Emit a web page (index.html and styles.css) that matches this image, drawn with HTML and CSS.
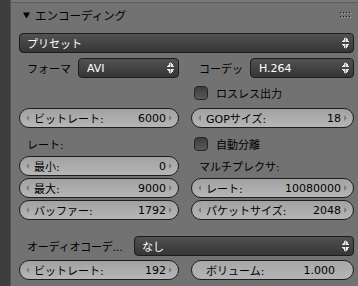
FILE: index.html
```html
<!DOCTYPE html>
<html lang="ja">
<head>
  <meta charset="UTF-8" />
  <title>エンコーディング</title>
  <link rel="stylesheet" href="styles.css">
</head>
<body>

<div class="edge"></div>

<section class="panel">
  <header class="panel-head">
    <svg class="caret" width="7" height="7" viewBox="0 0 7 7"><polygon points="0,0.5 7,0.5 3.5,6.5" fill="#000"/></svg>
    <span class="title">エンコーディング</span>
    <svg class="grip" width="11" height="6" viewBox="0 0 11 6">
      <g fill="#aaa">
        <rect x="1" y="1" width="1" height="1"/><rect x="4" y="1" width="1" height="1"/><rect x="7" y="1" width="1" height="1"/><rect x="10" y="1" width="1" height="1"/>
        <rect x="1" y="5" width="1" height="1"/><rect x="4" y="5" width="1" height="1"/><rect x="7" y="5" width="1" height="1"/><rect x="10" y="5" width="1" height="1"/>
      </g>
      <g fill="#222">
        <rect x="0" y="0" width="1" height="1"/><rect x="3" y="0" width="1" height="1"/><rect x="6" y="0" width="1" height="1"/><rect x="9" y="0" width="1" height="1"/>
        <rect x="0" y="4" width="1" height="1"/><rect x="3" y="4" width="1" height="1"/><rect x="6" y="4" width="1" height="1"/><rect x="9" y="4" width="1" height="1"/>
      </g>
    </svg>
  </header>

  <div class="panel-body">
    <div class="menu"><span>プリセット</span><i class="updown"></i></div>

    <div class="split gap5">
      <div class="labeled">
        <span class="label">フォーマ</span>
        <div class="menu"><span class="latin">AVI</span><i class="updown"></i></div>
      </div>
      <div class="labeled">
        <span class="label">コーデッ</span>
        <div class="menu"><span class="latin">H.264</span><i class="updown"></i></div>
      </div>
    </div>

    <div class="split gap5">
      <div></div>
      <label class="check"><i class="box"></i>ロスレス出力</label>
    </div>

    <div class="split gap5">
      <div class="num"><i class="arr left"></i><span class="name">ビットレート:</span><span class="val">6000</span><i class="arr right"></i></div>
      <div class="num"><i class="arr left"></i><span class="name">GOPサイズ:</span><span class="val">18</span><i class="arr right"></i></div>
    </div>

    <div class="split gap6">
      <div class="col">
        <span class="label row">レート:</span>
        <div class="num"><i class="arr left"></i><span class="name">最小:</span><span class="val">0</span><i class="arr right"></i></div>
        <div class="num"><i class="arr left"></i><span class="name">最大:</span><span class="val">9000</span><i class="arr right"></i></div>
        <div class="num"><i class="arr left"></i><span class="name">バッファー:</span><span class="val">1792</span><i class="arr right"></i></div>
      </div>
      <div class="col">
        <label class="check row"><i class="box"></i>自動分離</label>
        <span class="label row">マルチプレクサ:</span>
        <div class="num"><i class="arr left"></i><span class="name">レート:</span><span class="val">10080000</span><i class="arr right"></i></div>
        <div class="num"><i class="arr left"></i><span class="name">パケットサイズ:</span><span class="val">2048</span><i class="arr right"></i></div>
      </div>
    </div>

    <div class="audio gap16">
      <span class="label">オーディオコーデ...</span>
      <div class="menu"><span>なし</span><i class="updown"></i></div>
    </div>

    <div class="split gap4">
      <div class="num"><i class="arr left"></i><span class="name">ビットレート:</span><span class="val">192</span><i class="arr right"></i></div>
      <div class="num slider"><span class="name">ボリューム:</span><span class="val">1.000</span></div>
    </div>
  </div>
</section>

</body>
</html>
```

FILE: styles.css
```css
* {
  box-sizing: border-box;
}

body {
  margin: 0;
  width: 358px;
  height: 286px;
  overflow: hidden;
  display: flex;
  background: #3d3d3d;
  font-family: 'DejaVu Sans', 'Noto Sans CJK JP', sans-serif;
  font-size: 11px;
  color: #000;
}

.edge {
  width: 11px;
  flex: none;
  background: #3d3d3d;
  border-right: 1px solid #545454;
}

.panel {
  flex: 1;
  background: #727272;
  border-top: 2px solid #7a7a7a;
  display: flex;
  flex-direction: column;
}

.panel-head {
  height: 25px;
  border-top: 1px solid #5c5c5c;
  display: flex;
  align-items: center;
  padding: 0 7px 0 12px;
  font-size: 11.5px;
}

.caret {
  margin-right: 5px;
}

.title {
  flex: 1;
}

.grip {
  margin-top: -1px;
}

.panel-body {
  padding: 6px 4px 0 8px;
  display: flex;
  flex-direction: column;
}

.gap4 { margin-top: 4px; }
.gap5 { margin-top: 5px; }
.gap6 { margin-top: 6px; }
.gap16 { margin-top: 16px; }

.split {
  display: grid;
  grid-template-columns: 160px 163px;
  column-gap: 12px;
}

.col {
  display: flex;
  flex-direction: column;
  gap: 2px;
}

.row {
  height: 20px;
}

.labeled {
  display: grid;
  grid-template-columns: 59px 1fr;
  align-items: center;
}

.label {
  padding-left: 7px;
  display: flex;
  align-items: center;
  white-space: nowrap;
}

.labeled .label,
.col .label {
  padding-left: 8px;
}

.menu {
  height: 20px;
  border: 1px solid #1c1c1c;
  border-radius: 4px;
  background: linear-gradient(#515151, #363636);
  color: #fff;
  display: flex;
  align-items: center;
  padding: 0 4px 0 7px;
}

.menu span {
  flex: 1;
}

.latin {
  padding-left: 1px;
}

.updown {
  width: 7px;
  height: 12px;
  background:
    linear-gradient(to bottom right, transparent 50%, #e8e8e8 50%) left top / 3.5px 5px no-repeat,
    linear-gradient(to bottom left, transparent 50%, #e8e8e8 50%) right top / 3.5px 5px no-repeat,
    linear-gradient(to top right, transparent 50%, #e8e8e8 50%) left bottom / 3.5px 5px no-repeat,
    linear-gradient(to top left, transparent 50%, #e8e8e8 50%) right bottom / 3.5px 5px no-repeat;
}

.check {
  display: flex;
  align-items: center;
  padding-left: 3px;
  height: 20px;
}

.box {
  width: 14px;
  height: 14px;
  margin-right: 8px;
  border: 1px solid #242424;
  border-radius: 4px;
  background: linear-gradient(#3c3c3c, #5a5a5a);
}

.num {
  height: 20px;
  border: 1px solid #1e1e1e;
  border-radius: 10px;
  background: linear-gradient(#a2a2a2, #b6b6b6);
  display: flex;
  align-items: center;
  padding: 0 6px;
}

.num .name {
  flex: 1;
  margin-left: 5px;
  white-space: nowrap;
}

.num .val {
  margin-right: 3px;
}

.arr {
  width: 0;
  height: 0;
  border-top: 3px solid transparent;
  border-bottom: 3px solid transparent;
}

.arr.left {
  border-right: 3px solid #7e7e7e;
}

.arr.right {
  border-left: 3px solid #7e7e7e;
}

.slider {
  background: linear-gradient(#a8a8a8, #b4b4b4);
  padding: 0 15px 0 14px;
}

.slider .name {
  margin-left: 0;
}

.audio {
  display: grid;
  grid-template-columns: 115px 1fr;
  align-items: center;
}

.audio .label {
  padding-left: 8px;
  letter-spacing: -0.2px;
}
```
